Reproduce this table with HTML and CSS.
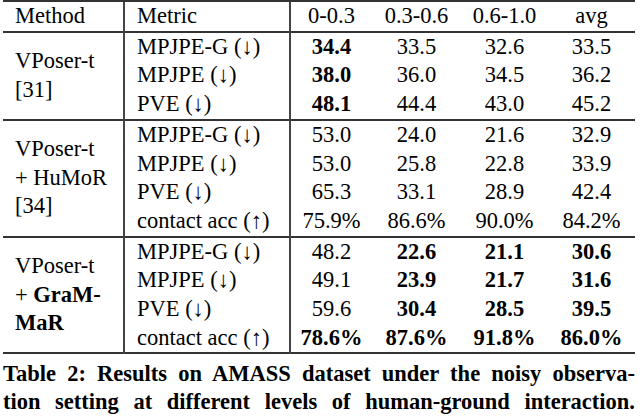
FILE: index.html
```html
<!DOCTYPE html>
<html lang="en">
<head>
<meta charset="utf-8">
<title>Table 2</title>
<link rel="stylesheet" href="styles.css">
</head>
<body>
<div class="page">
  <div class="table-wrap">
    <table class="results">
      <colgroup>
        <col class="c-method">
        <col class="c-metric">
        <col class="c-a">
        <col class="c-b">
        <col class="c-c">
        <col class="c-d">
      </colgroup>
      <thead>
        <tr>
          <th class="method">Method</th>
          <th class="metric">Metric</th>
          <th>0-0.3</th>
          <th>0.3-0.6</th>
          <th>0.6-1.0</th>
          <th>avg</th>
        </tr>
      </thead>
      <tbody>
        <tr>
          <td rowspan="3" class="method">VPoser-t<br>[31]</td>
          <td class="metric">MPJPE-G (↓)</td>
          <td class="best">34.4</td><td>33.5</td><td>32.6</td><td>33.5</td>
        </tr>
        <tr>
          <td class="metric">MPJPE (↓)</td>
          <td class="best">38.0</td><td>36.0</td><td>34.5</td><td>36.2</td>
        </tr>
        <tr>
          <td class="metric">PVE (↓)</td>
          <td class="best">48.1</td><td>44.4</td><td>43.0</td><td>45.2</td>
        </tr>
      </tbody>
      <tbody>
        <tr>
          <td rowspan="4" class="method">VPoser-t<br>+ HuMoR<br>[34]</td>
          <td class="metric">MPJPE-G (↓)</td>
          <td>53.0</td><td>24.0</td><td>21.6</td><td>32.9</td>
        </tr>
        <tr>
          <td class="metric">MPJPE (↓)</td>
          <td>53.0</td><td>25.8</td><td>22.8</td><td>33.9</td>
        </tr>
        <tr>
          <td class="metric">PVE (↓)</td>
          <td>65.3</td><td>33.1</td><td>28.9</td><td>42.4</td>
        </tr>
        <tr>
          <td class="metric">contact acc (↑)</td>
          <td>75.9%</td><td>86.6%</td><td>90.0%</td><td>84.2%</td>
        </tr>
      </tbody>
      <tbody>
        <tr>
          <td rowspan="4" class="method">VPoser-t<br>+ <b>GraM-<br>MaR</b></td>
          <td class="metric">MPJPE-G (↓)</td>
          <td>48.2</td><td class="best">22.6</td><td class="best">21.1</td><td class="best">30.6</td>
        </tr>
        <tr>
          <td class="metric">MPJPE (↓)</td>
          <td>49.1</td><td class="best">23.9</td><td class="best">21.7</td><td class="best">31.6</td>
        </tr>
        <tr>
          <td class="metric">PVE (↓)</td>
          <td>59.6</td><td class="best">30.4</td><td class="best">28.5</td><td class="best">39.5</td>
        </tr>
        <tr>
          <td class="metric">contact acc (↑)</td>
          <td class="best">78.6%</td><td class="best">87.6%</td><td class="best">91.8%</td><td class="best">86.0%</td>
        </tr>
      </tbody>
    </table>
  </div>
  <p class="caption">
    <span class="line">Table 2: Results on AMASS dataset under the noisy observa-</span>
    <span class="line">tion setting at different levels of human-ground interaction.</span>
  </p>
</div>
</body>
</html>
```

FILE: styles.css
```css
html, body {
  margin: 0;
  padding: 0;
  background: #ffffff;
}

.page {
  padding-left: 3px;
  width: 632px;
  font-family: "Liberation Serif", "DejaVu Serif", serif;
  color: #000;
}

.table-wrap {
  width: 632px;
  border-top: 2px solid #333;
}

.results {
  width: 632px;
  table-layout: fixed;
  border-collapse: collapse;
  font-family: "Liberation Serif", "DejaVu Serif", serif;
  font-size: 22.5px;
}

.c-method { width: 121px; }
.c-metric { width: 166px; }
.c-a { width: 82px; }
.c-b { width: 89px; }
.c-c { width: 87px; }
.c-d { width: 87px; }

.results thead,
.results tbody {
  border-bottom: 2px solid #333;
}

.results th,
.results td {
  padding: 0;
  height: 28.7px;
  line-height: 28.7px;
  text-align: center;
  vertical-align: middle;
  font-family: "Liberation Serif", "DejaVu Serif", serif;
  font-weight: normal;
  white-space: nowrap;
}

.results thead th {
  height: 28px;
}

.results .method,
.results .metric {
  text-align: left;
  padding-left: 12px;
  border-right: 2px solid #444;
}

.results td.method {
  line-height: 28.5px;
}

.results .best,
.results b {
  font-weight: bold;
}

.caption {
  margin: 6px 0 0 0;
  font-family: "Liberation Serif", "DejaVu Serif", serif;
  font-size: 22.5px;
  line-height: 28px;
  font-weight: bold;
  color: #000;
}

.caption .line {
  display: block;
  text-align: justify;
  text-align-last: justify;
}
```
